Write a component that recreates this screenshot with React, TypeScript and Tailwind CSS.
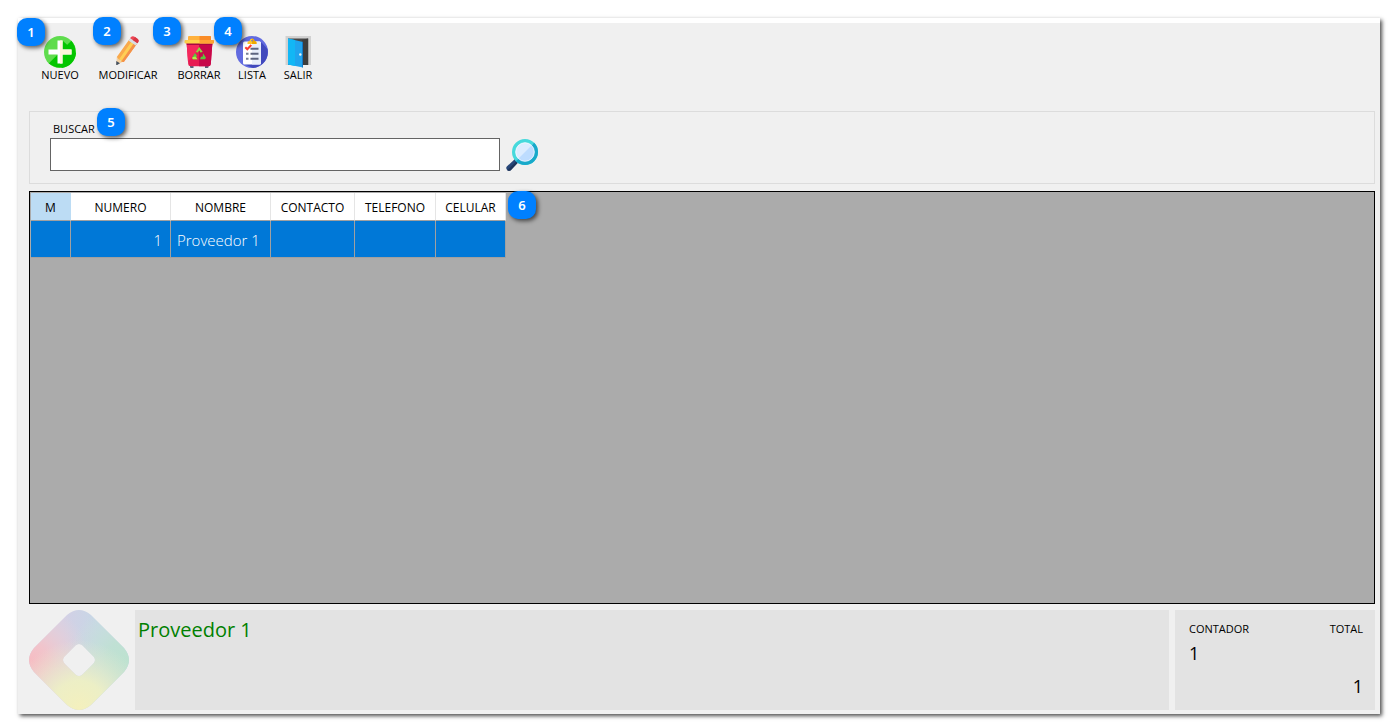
import type { ReactNode } from "react";

function Badge({ n, className }: { n: number; className: string }) {
  return (
    <span
      className={`pointer-events-none absolute z-10 flex size-7 items-center justify-center rounded-[10px] bg-[#0080ff] font-['Noto_Sans',sans-serif] text-[13px] leading-4 font-semibold text-white shadow-[2px_2px_4px_rgba(0,0,0,0.6)] ${className}`}
    >
      {n}
    </span>
  );
}

const NewIcon = () => (
  <svg viewBox="0 0 32 32" className="size-8" aria-hidden="true">
    <circle cx="16" cy="16" r="16" fill="#5fdc4d" />
    <path d="M27.3 4.7A16 16 0 0 1 4.7 27.3Z" fill="#04c600" />
    <path d="M4.700 27.300 13.500 18.500V13.500H4.500v5H10L2.800 25Z" fill="#5fdc4d" />
    <path d="M19 5 32 17A16 16 0 0 1 18 31.900L13 27Z" fill="#04c600" />
    <path d="M13.500 4.500h5v9h9v5h-9v9h-5v-9h-9v-5h9z" fill="#fff" />
    <path d="M16 4.500h2.500v9h9v5h-9v9H16z" fill="#fff5da" />
  </svg>
);

const PencilIcon = () => (
  <svg viewBox="0.7 0 32 32" className="size-8" aria-hidden="true">
    <path d="M5 28.500 5.500 21 12 25.500 6 28.800Q5 29.200 5 28.500Z" fill="#f3d1a4" />
    <path d="m5 25-.1 3.500q.1.800.9.500l2.900-1.700Z" fill="#465363" />
    <path d="m5.500 21 12.800-18 7.200 5L12.500 26l-2.300-.2-.6-2-2-.4z" fill="#f9a94b" />
    <path d="m7.600 23.400 13-18.500 2.400 1.700-13 18.700-.5-1.600z" fill="#ffcf55" />
    <path d="m10.200 25.400 13-18.700 2.300 1.300-13 18z" fill="#f4914a" />
    <path d="m17.200 4.500 1.700-2.300 7.300 5-1.800 2.400z" fill="#d7dde5" />
    <path d="m18.900 2.200.7-1q1.200-1.700 3.200-.7l3.300 2.200q2 1.500.9 3.400l-.8 1.100z" fill="#ed4655" />
    <path d="m21.500 4 2.300-3.100 2.300 1.800q2 1.500.9 3.400l-.8 1.100z" fill="#d83744" />
  </svg>
);

const BinIcon = () => (
  <svg viewBox="0 0 32 32" className="size-8" aria-hidden="true">
    <path d="M7 29h3.500v3H8q-1 0-1-1zM22 29h3.500v2q0 1-1 1H22z" fill="#55607b" />
    <path d="M3.600 7h25.800l-1.600 21q-.2 2.200-2.400 2.200H7.600Q5.400 30.200 5.200 28z" fill="#e71b52" />
    <path d="M3.600 7H16v6L5 25.500z" fill="#f5285c" />
    <path d="M16 7h13.400l-1.600 21q-.2 2.200-2.400 2.200H16z" fill="#c7084a" />
    <path d="M3.600 7h25.800l-.2 2H3.800z" fill="#a90842" />
    <path d="M5 1q0-1 1-1h21q1 0 1 1v4H5z" fill="#ffb13d" />
    <path d="M16.500 0H27q1 0 1 1v4H16.500z" fill="#fa8c27" />
    <rect x="1.500" y="4" width="29.500" height="3.500" rx="1" fill="#ffd24a" />
    <path d="M16.500 4H30q1 0 1 1v1.500q0 1-1 1H16.500z" fill="#ffa535" />
    <path d="m12.800 16 3.400-5 3.600 5-2.400.6-1.200-2.300-1.400 2.200z" fill="#8ed63f" />
    <path d="m12 17 2.200 3-1.200 1 1.500 2.300h-4.600l-.9-1.600zM20 17.200l3 4.600-1 1.500h-5l1-2.600 1.800-.2z" fill="#5dc43e" />
    <path d="m10.500 21 1.900-.5 2.100 2.800h-4.600l-.9-1.600z" fill="#b8eb4b" />
  </svg>
);

const ListIcon = () => (
  <svg viewBox="0 0 32 32" className="size-8" aria-hidden="true">
    <circle cx="16" cy="16" r="16" fill="#626be0" />
    <path d="m25 6 6.500 7A16 16 0 0 1 17 32l-9-4z" fill="#4149bd" />
    <rect x="7" y="5.500" width="18" height="23" rx="1.500" fill="#fff" />
    <path d="M16 5.500h7.500Q25 5.500 25 7v20q0 1.500-1.500 1.500H16z" fill="#e8eefa" />
    <path d="M11.500 8V6.500Q11.500 5 13.500 5q.4-2.500 2.500-2.500T18.500 5q2 0 2 1.500V8z" fill="#ffc928" />
    <path d="M16 2.500q2.100 0 2.500 2.500 2 0 2 1.500V8H16z" fill="#eea900" />
    <circle cx="16" cy="4.700" r=".8" fill="#626be0" />
    <path d="M14.500 12.800h8M14.500 17.800h8M14.500 22.800h8" stroke="#5d6580" strokeWidth="2" />
    <path d="M10 16.800h2.500v2H10zM10 21.800h2.500v2H10z" fill="#777f95" />
    <path d="m9.300 11.300 2 2 4-4.300" fill="none" stroke="#ff3c2e" strokeWidth="2" />
  </svg>
);

const DoorIcon = () => (
  <svg viewBox="0 0 32 32" className="size-8" aria-hidden="true">
    <path d="M3.500 0H29v29h-3V3H6v26H3.500z" fill="#d1d1d1" />
    <path d="M6 2.500h20V29H6z" fill="#484848" />
    <path d="M20 29V4l6-1.500V29z" fill="#3d3d3d" />
    <path d="M26 2.500h1V29h-1z" fill="#a9a9a9" />
    <path d="M6 2.500 21 6v25.500L6 28.500z" fill="#20a4ee" />
    <path d="M6 2.500 13 4v26L6 28.500z" fill="#12b7f5" />
    <path d="M20 5.700 21 6v25.500l-1-.2z" fill="#1278c6" />
    <circle cx="18.300" cy="18.500" r="1.200" fill="#e7f3fa" />
  </svg>
);

const SearchIcon = () => (
  <svg viewBox="0 0 32 32" className="size-8" aria-hidden="true">
    <path d="m9.500 19.500 3.500 3-8 8.500q-1.700 1.600-3.700.2Q-.6 29.400.800 27.500z" fill="#274678" />
    <path d="m11.500 21.200 1.500 1.300-8 8.500q-1.700 1.600-3.700.2z" fill="#1e3358" />
    <path d="m8.500 20.500 2-2 3 3-2 2z" fill="#3561a5" />
    <circle cx="19" cy="13" r="11.300" fill="#dcecff" stroke="#46d9dc" strokeWidth="3.400" />
    <path d="M27 5A11.300 11.300 0 0 1 11 21" fill="#bddcff" stroke="#18a9ca" strokeWidth="3.400" />
    <circle cx="19" cy="13" r="9.300" fill="none" stroke="#fff" strokeOpacity=".65" strokeWidth="1" />
  </svg>
);

const Logo = () => (
  <svg viewBox="0 0 100 100" className="size-[100px] shrink-0" role="img" aria-label="Logo">
    <defs>
      <radialGradient id="pink" gradientUnits="userSpaceOnUse" cx="2" cy="50" r="58">
        <stop offset="0" stopColor="#f6bdc3" />
        <stop offset=".3" stopColor="#f4c3c9" stopOpacity=".9" />
        <stop offset="1" stopColor="#f1d5d5" stopOpacity="0" />
      </radialGradient>
      <radialGradient id="green" gradientUnits="userSpaceOnUse" cx="98" cy="50" r="58">
        <stop offset="0" stopColor="#bde2d0" />
        <stop offset=".35" stopColor="#bfe1d2" stopOpacity=".9" />
        <stop offset="1" stopColor="#cce4d6" stopOpacity="0" />
      </radialGradient>
      <radialGradient id="yellow" gradientUnits="userSpaceOnUse" cx="50" cy="98" r="68">
        <stop offset="0" stopColor="#f4f0bd" />
        <stop offset=".4" stopColor="#eef0c4" stopOpacity=".95" />
        <stop offset="1" stopColor="#e8ead0" stopOpacity="0" />
      </radialGradient>
      <linearGradient id="base" x1="0" y1="0" x2="1" y2="0">
        <stop offset=".35" stopColor="#d3d0e5" />
        <stop offset=".7" stopColor="#c6d7e6" />
      </linearGradient>
      <path
        id="diamond"
        fillRule="evenodd"
        d="M38 5Q50-5 62 5L95 38Q105 50 95 62L62 95Q50 105 38 95L5 62Q-5 50 5 38ZM46.500 35.500 35.500 46.500Q32.500 50 35.500 53.500L46.500 64.500Q50 67.500 53.500 64.500L64.500 53.500Q67.500 50 64.500 46.500L53.500 35.500Q50 32.500 46.500 35.500Z"
      />
    </defs>
    <use href="#diamond" fill="url(#base)" />
    <use href="#diamond" fill="url(#pink)" />
    <use href="#diamond" fill="url(#green)" />
    <use href="#diamond" fill="url(#yellow)" />
  </svg>
);

type Tool = { label: string; icon: ReactNode; width: string; badge?: string };

const tools: Tool[] = [
  { label: "NUEVO", icon: <NewIcon />, width: "w-12", badge: "-left-[19px] -top-[18px]" },
  { label: "MODIFICAR", icon: <PencilIcon />, width: "w-[88px]", badge: "left-[9px] -top-[19px]" },
  { label: "BORRAR", icon: <BinIcon />, width: "w-[54px]", badge: "-left-[19px] -top-[19px]" },
  { label: "LISTA", icon: <ListIcon />, width: "w-[52px]", badge: "-left-3 -top-[19px]" },
  { label: "SALIR", icon: <DoorIcon />, width: "w-10" },
];

const columns = [
  { label: "M", width: "w-10" },
  { label: "NUMERO", width: "w-[100px]" },
  { label: "NOMBRE", width: "w-[100px]" },
  { label: "CONTACTO", width: "w-[84px]" },
  { label: "TELEFONO", width: "w-[81px]" },
  { label: "CELULAR", width: "w-[70px]" },
];

export default function App() {
  return (
    <div className="flex min-h-screen flex-col bg-white pt-[18px] pr-[9px] pb-[9px] pl-[18px] font-['Open_Sans','Noto_Sans',sans-serif] text-black">
      <main className="flex flex-1 flex-col border-t-[5px] border-white bg-[#f0f0f0] pr-[5px] pb-1 pl-[11px] shadow-[2px_2px_4px_rgba(0,0,0,0.7)]">
        <nav aria-label="Acciones" className="flex h-[88px] shrink-0 items-start pt-[13px] pl-[7px]">
          {tools.map((tool, i) => (
            <button
              key={tool.label}
              type="button"
              className={`relative flex shrink-0 flex-col items-center text-[11px] leading-[14px] whitespace-nowrap ${tool.width}`}
            >
              {tool.icon}
              <span>{tool.label}</span>
              {tool.badge && <Badge n={i + 1} className={tool.badge} />}
            </button>
          ))}
        </nav>

        <form
          role="search"
          onSubmit={(e) => e.preventDefault()}
          className="flex flex-col border border-[#dcdcdc] pt-2.5 pb-3 pl-5"
        >
          <label htmlFor="buscar" className="relative h-4 self-start pl-[3px] text-[11px] leading-[14px]">
            BUSCAR
            <Badge n={5} className="-top-3.5 left-[47px]" />
          </label>
          <div className="flex items-center gap-1.5">
            <input
              id="buscar"
              type="text"
              className="h-[33px] w-[450px] border border-[#646464] bg-white px-2 text-sm outline-none"
            />
            <button type="submit" aria-label="Buscar">
              <SearchIcon />
            </button>
          </div>
        </form>

        <section className="mt-[7px] flex flex-1 items-start border border-black bg-[#ababab] pt-px pl-px">
          <div className="relative">
            <table className="w-[475px] table-fixed border-separate border-spacing-0">
              <thead>
                <tr className="h-7 bg-white text-[12px] leading-4">
                  {columns.map((c) => (
                    <th
                      key={c.label}
                      scope="col"
                      className={`border-r border-b border-r-[#e5e5e5] border-b-[#a0a0a0] p-0 pt-0.5 text-center font-normal first:border-r-[#bcdcf4] first:bg-[#bcdcf4] ${c.width}`}
                    >
                      {c.label}
                    </th>
                  ))}
                </tr>
              </thead>
              <tbody>
                <tr className="h-[37px] bg-[#0078d7] text-[15px] leading-5 font-light text-white">
                  <td className="border-r border-b border-[#a0a0a0] p-0" />
                  <td className="border-r border-b border-[#a0a0a0] p-0 pt-0.5 pr-2 text-right">1</td>
                  <td className="border-r border-b border-[#a0a0a0] p-0 pt-0.5 pl-1.5 whitespace-nowrap">Proveedor 1</td>
                  <td className="border-r border-b border-[#a0a0a0] p-0" />
                  <td className="border-r border-b border-[#a0a0a0] p-0" />
                  <td className="border-r border-b border-[#a0a0a0] p-0" />
                </tr>
              </tbody>
            </table>
            <Badge n={6} className="-top-0.5 left-[477px]" />
          </div>
        </section>

        <footer className="mt-1.5 flex gap-1.5">
          <Logo />
          <output className="flex-1 bg-[#e3e3e3] px-[3px] pt-1 text-[20px] leading-8 text-[#008000]">
            Proveedor 1
          </output>
          <dl className="flex w-[200px] shrink-0 justify-between bg-[#e3e3e3] pt-3 pr-3 pl-3.5">
            <div>
              <dt className="text-[11px] leading-[14px]">CONTADOR</dt>
              <dd className="mt-[5px] text-[18px] leading-6 font-medium">1</dd>
            </div>
            <div className="text-right">
              <dt className="text-[11px] leading-[14px]">TOTAL</dt>
              <dd className="mt-[38px] text-[18px] leading-6 font-medium">1</dd>
            </div>
          </dl>
        </footer>
      </main>
    </div>
  );
}
